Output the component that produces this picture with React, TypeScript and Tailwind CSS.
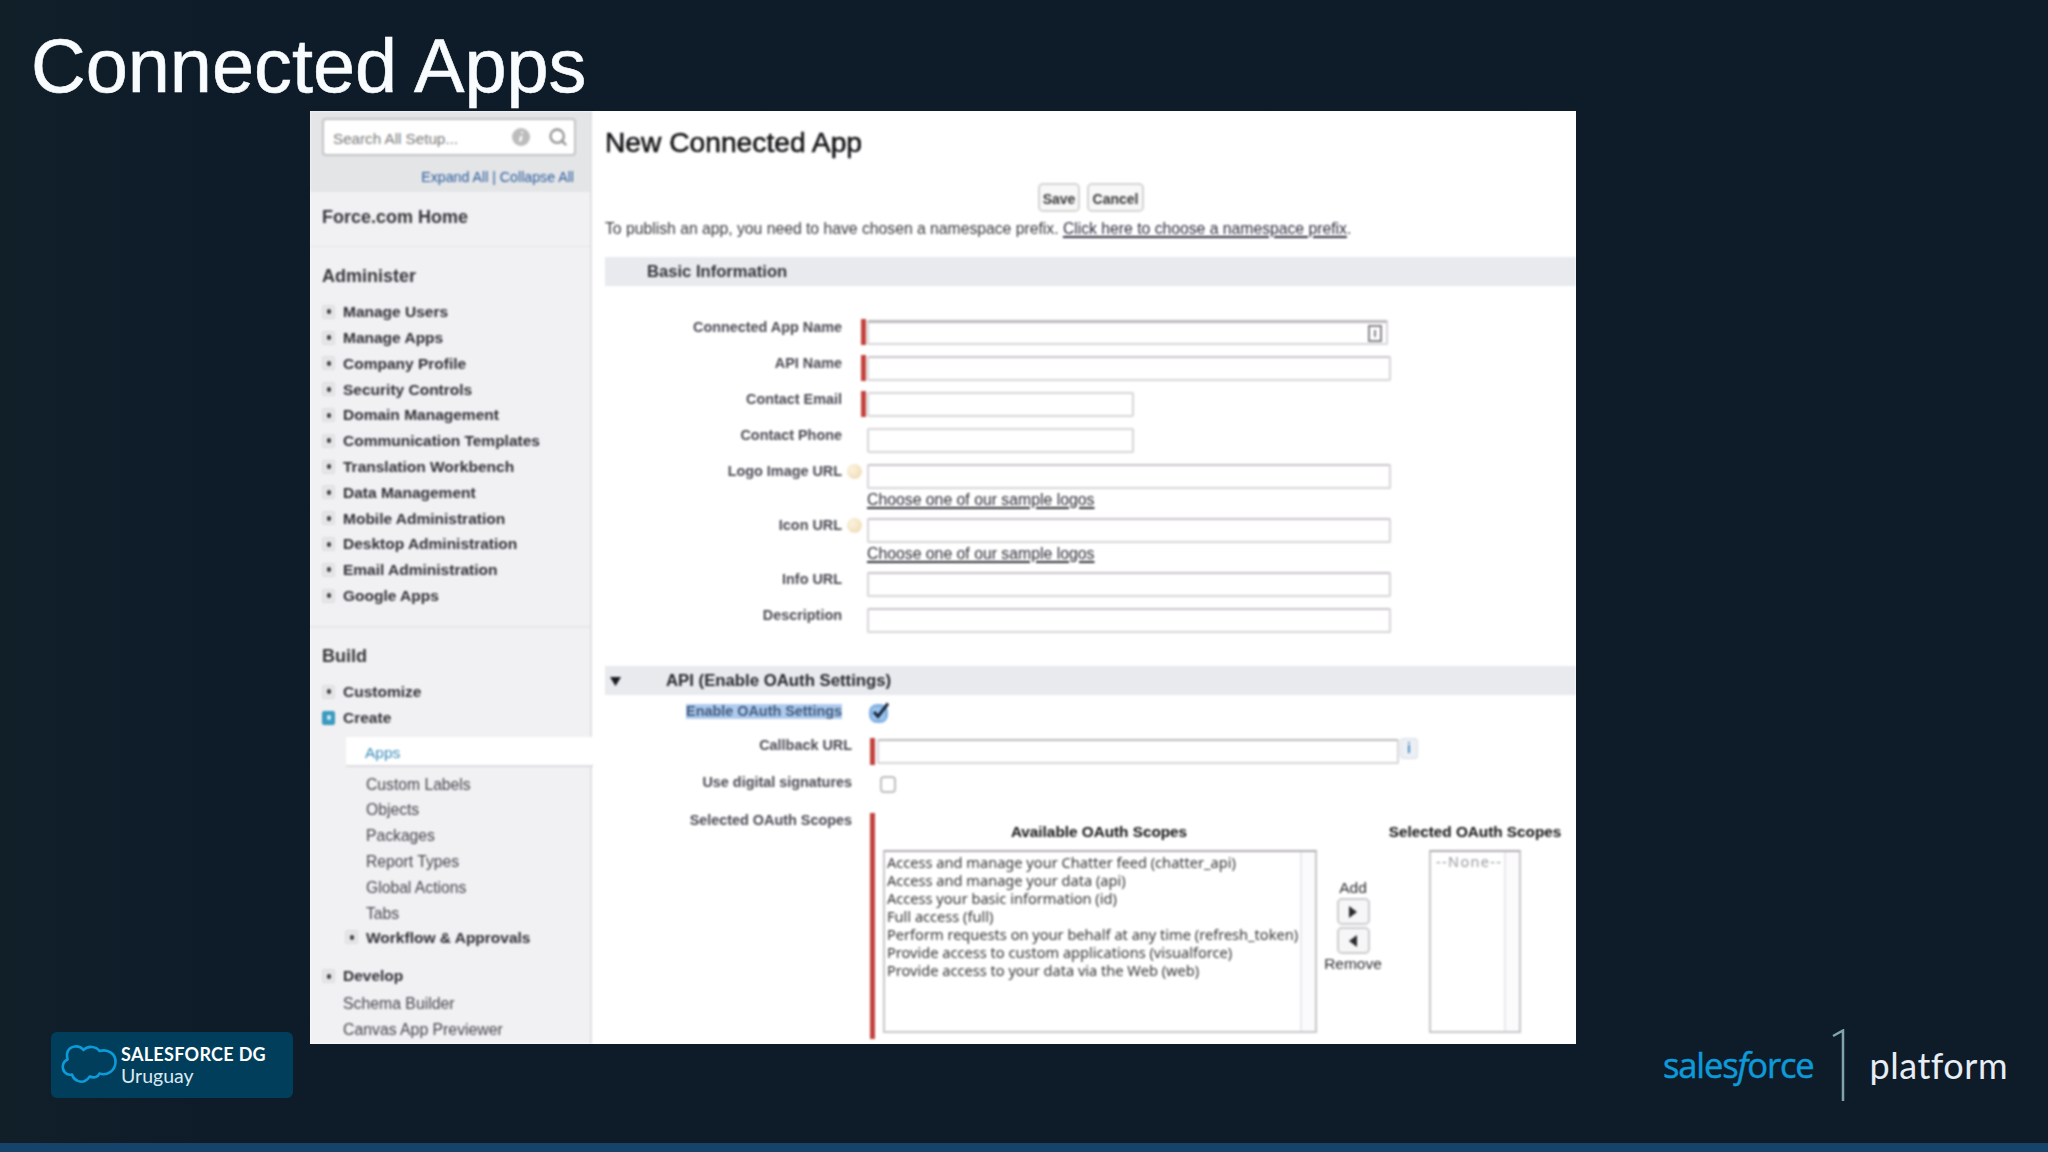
import { Search } from "lucide-react"
import { clsx } from "clsx"

type NavItem = { label: string; open?: boolean }

const ADMINISTER: NavItem[] = [
  { label: "Manage Users" },
  { label: "Manage Apps" },
  { label: "Company Profile" },
  { label: "Security Controls" },
  { label: "Domain Management" },
  { label: "Communication Templates" },
  { label: "Translation Workbench" },
  { label: "Data Management" },
  { label: "Mobile Administration" },
  { label: "Desktop Administration" },
  { label: "Email Administration" },
  { label: "Google Apps" },
]

const CREATE_ITEMS = ["Custom Labels", "Objects", "Packages", "Report Types", "Global Actions", "Tabs"]

const SCOPES = [
  "Access and manage your Chatter feed (chatter_api)",
  "Access and manage your data (api)",
  "Access your basic information (id)",
  "Full access (full)",
  "Perform requests on your behalf at any time (refresh_token)",
  "Provide access to custom applications (visualforce)",
  "Provide access to your data via the Web (web)",
]

function Toggle({ open }: { open?: boolean }) {
  return (
    <span className={clsx("flex h-[14px] w-[13px] items-center justify-center rounded-[2px] border", open ? "border-[#3a93b5] bg-[#3a9bc0]" : "border-[#dcdcdf] bg-[#e6e6e9]")}>
      <span className={clsx("h-[5px] w-[4px] rounded-full", open ? "bg-[#d5eef7]" : "bg-[#3c3c40]")} />
    </span>
  )
}

function NavRow({ label, open }: NavItem) {
  return (
    <li className="flex h-[25.8px] items-center gap-[8px] text-[15.5px] font-bold text-[#2f2f34]">
      <Toggle open={open} />
      {label}
    </li>
  )
}

function Sidebar() {
  return (
    <aside className="flex h-full w-[282px] shrink-0 flex-col border-r-2 border-[#e0e0e4] bg-[#f1f1f4]">
      <div className="h-[81px] bg-[#e4e5e7] pt-[7px] pr-[15px] pl-[12px]">
        <div className="flex h-[38px] w-[254px] items-center rounded-[4px] border-2 border-[#c4c4c6] bg-white pr-[6px] pl-[9px]">
          <span className="grow pt-[4px] text-[15.2px] text-[#7c7c7c]">Search All Setup...</span>
          <svg viewBox="0 0 18 18" className="size-[18px]">
            <circle cx="9" cy="9" r="9" fill="#bcbcbc" />
            <path d="M10.500 4L9.500 5M9.500 8L8 13.500" stroke="#fff" strokeWidth="2.500" fill="none" />
          </svg>
          <Search className="ml-[18px] size-[20px] text-[#969696]" strokeWidth={2.8} />
        </div>
        <div className="mt-[11px] w-[252px] text-right text-[14.2px] leading-[20px] text-[#2b5c9c]">Expand All | Collapse All</div>
      </div>
      <div className="h-[55px] border-b border-[#e6e6ea] pl-[12px] text-[18px] leading-[50px] font-bold text-[#353539]">Force.com Home</div>
      <div className="h-[381px] border-b-2 border-[#e6e6ea] pl-[12px]">
        <h2 className="pt-[15px] text-[18px] leading-[28px] font-bold text-[#353539]">Administer</h2>
        <ul className="pt-[9px]">
          {ADMINISTER.map((item) => <NavRow key={item.label} {...item} />)}
        </ul>
      </div>
      <div className="flex flex-col pl-[12px]">
        <h2 className="pt-[14px] text-[18px] leading-[28px] font-bold text-[#353539]">Build</h2>
        <ul className="pt-[9px]">
          <NavRow label="Customize" />
          <NavRow label="Create" open />
        </ul>
        <div className="-mr-[3px] mt-[6px] ml-[24px] h-[30px] border-b-2 border-[#dddde1] bg-white pl-[19px] text-[15.5px] leading-[31px] text-[#3a8dba]">Apps</div>
        <ul className="mt-[5px] pl-[44px] text-[15.7px] text-[#45454a]">
          {CREATE_ITEMS.map((label) => <li key={label} className="h-[25.8px] leading-[25.8px]">{label}</li>)}
        </ul>
        <ul className="-mt-[2px] pl-[23px]"><NavRow label="Workflow & Approvals" /></ul>
        <ul className="mt-[13px]"><NavRow label="Develop" /></ul>
        <ul className="mt-[2px] pl-[21px] text-[15.8px] text-[#45454a]">
          <li className="h-[25.7px] leading-[25.7px]">Schema Builder</li>
          <li className="h-[25.7px] leading-[25.7px]">Canvas App Previewer</li>
        </ul>
      </div>
    </aside>
  )
}

type FieldProps = { label: string; required?: boolean; short?: boolean; hint?: boolean; sample?: boolean; picker?: boolean }

function Field({ label, required, short, hint, sample, picker }: FieldProps) {
  return (
    <div className={clsx("flex items-start", sample ? "h-[54px]" : "h-[36px]")}>
      <div className="w-[237px] text-right text-[14.4px] leading-[16px] font-bold text-[#484852]">{label}</div>
      <div className="flex w-[25px] justify-end pr-px">
        {hint && <span className="mt-px mr-[4px] size-[15px] rounded-full bg-radial-[at_35%_35%] from-[#fbf3de] to-[#ecd6ae]" />}
        {required && <span className="h-[26px] w-[5px] bg-[#c2423c]" />}
      </div>
      <div className="pt-px">
        <div className={clsx("flex h-[25px] items-center justify-end rounded-[2px] border-2 border-[#d8d5d8] bg-white pr-[4px]", short ? "w-[267px]" : picker ? "w-[521px] border-t-3 border-t-[#bebabe]" : "w-[524px] border-t-[#c8c4c8]")}>
          {picker && (
            <span className="flex h-[17px] w-[14px] items-center justify-center border-2 border-[#848488]">
              <span className="h-[7px] w-[2px] bg-[#848488]" />
            </span>
          )}
        </div>
        {sample && <a className="block pt-px text-[15.8px] leading-[20px] text-[#2c2c36] underline decoration-[1.5px] underline-offset-[2px]">Choose one of our sample logos</a>}
      </div>
    </div>
  )
}

function ListBox({ children, className }: { children: React.ReactNode; className: string }) {
  return (
    <div className={clsx("flex h-[183px] border-2 border-[#cac6ca] border-t-[#b0acb0] bg-white", className)}>
      <div className="grow pt-px pl-[2px]">{children}</div>
      <div className="w-[15px] border-l-2 border-[#eae9ee] bg-[#fbfbfc]" />
    </div>
  )
}

function ArrowButton({ dir }: { dir: "left" | "right" }) {
  return (
    <span className="flex h-[27px] w-[33px] items-center justify-center rounded-[5px] border-2 border-[#cecbce] bg-[#f6f6f7]">
      <svg viewBox="0 0 8 12" className={clsx("h-[12px] w-[8px]", dir === "left" && "rotate-180")}>
        <path d="M0 0L8 6L0 12Z" fill="#2a2a2c" />
      </svg>
    </span>
  )
}

function MainForm() {
  return (
    <main className="flex grow flex-col pl-[13px]">
      <h1 className="mt-[13px] text-[28.2px] leading-[36px] text-[#141417] [-webkit-text-stroke:0.6px_#141417]">New Connected App</h1>
      <div className="mt-[23px] flex h-[29px] gap-[7px] pl-[433px] text-[14px] font-bold text-[#38383a]">
        <span className="flex w-[42px] items-center justify-center rounded-[5px] border-2 border-[#d6d4d6] bg-[#f8f8f8] pt-[3px]">Save</span>
        <span className="flex w-[57px] items-center justify-center rounded-[5px] border-2 border-[#d6d4d6] bg-[#f8f8f8] pt-[3px]">Cancel</span>
      </div>
      <p className="mt-[7px] text-[15.73px] leading-[20px] whitespace-nowrap text-[#37373d]">
        To publish an app, you need to have chosen a namespace prefix.{" "}
        <a className="text-[#2c2c40] underline decoration-[1.5px] underline-offset-[2px]">Click here to choose a namespace prefix</a>.
      </p>
      <h2 className="mt-[18px] h-[29px] bg-[#e8eaee] pl-[42px] text-[16.6px] leading-[30px] font-bold text-[#32323a]">Basic Information</h2>

      <div className="flex flex-col pt-[33px]">
        <Field label="Connected App Name" required picker />
        <Field label="API Name" required />
        <Field label="Contact Email" required short />
        <Field label="Contact Phone" short />
        <Field label="Logo Image URL" hint sample />
        <Field label="Icon URL" hint sample />
        <Field label="Info URL" />
        <Field label="Description" />
      </div>

      <h2 className="mt-[23px] flex h-[29px] shrink-0 items-center bg-[#e8eaee] pt-px pl-[5px] text-[16.75px] font-bold text-[#26262c]">
        <svg viewBox="0 0 11 9" className="h-[9px] w-[11px]"><path d="M0 0H11L5.500 9Z" fill="#18181e" /></svg>
        <span className="pl-[45px]">API (Enable OAuth Settings)</span>
      </h2>

      <div className="flex h-[43px] items-start pt-[7px] text-[14.4px] font-bold">
        <div className="flex w-[237px] justify-end pt-[2px] leading-[15px]"><span className="bg-[#aecbee] text-[#41597a]">Enable OAuth Settings</span></div>
        <svg viewBox="0 0 22 22" className="ml-[26px] size-[22px]">
          <rect x="1" y="2" width="19" height="19" rx="8" fill="#7fb0e2" />
          <rect x="4" y="5" width="13" height="13" rx="3" fill="#9cc3eb" />
          <path d="M6 10L10 14.500L20 1.500" fill="none" stroke="#14243c" strokeWidth="3" />
        </svg>
      </div>
      <div className="flex h-[38px] items-start">
        <div className="-mt-px w-[247px] text-right text-[14.4px] leading-[16px] font-bold text-[#484852]">Callback URL</div>
        <span className="ml-[18px] h-[27px] w-[5px] bg-[#c2423c]" />
        <span className="mt-px ml-[2px] h-[25px] w-[522px] rounded-[2px] border-2 border-[#d8d5d8] border-t-[#bebabe] bg-white" />
        <span className="ml-px flex h-[21px] w-[18px] items-center justify-center rounded-[3px] border border-[#d9dee6] bg-[#eceff4] text-[14px] font-bold text-[#4a8ac4]">i</span>
      </div>
      <div className="flex h-[37px] items-start">
        <div className="-mt-[2px] w-[247px] text-right text-[14.4px] leading-[16px] font-bold text-[#484852]">Use digital signatures</div>
        <span className="ml-[28px] h-[17px] w-[16px] rounded-[4px] border-2 border-[#c0bec0] bg-white" />
      </div>
      <div className="flex h-[226px] items-start">
        <div className="-mt-px w-[247px] text-right text-[14.4px] leading-[16px] font-bold text-[#484852]">Selected OAuth Scopes</div>
        <span className="ml-[18px] h-full w-[5px] bg-[#c2423c]" />
        <div className="ml-[8px] flex w-[434px] flex-col items-center pt-[9px]">
          <h3 className="h-[28px] pr-[2px] text-[15.3px] leading-[20px] font-bold text-[#111113]">Available OAuth Scopes</h3>
          <ListBox className="w-full">
            <ul className="font-['Noto_Sans'] text-[14.6px] leading-[18px] whitespace-nowrap text-[#343437]">
              {SCOPES.map((scope) => <li key={scope}>{scope}</li>)}
            </ul>
          </ListBox>
        </div>
        <div className="flex w-[72px] flex-col items-center pt-[65px] text-[15.5px] leading-[20px] text-[#2b2b31]">
          Add
          <div className="flex flex-col gap-[2px]"><ArrowButton dir="right" /><ArrowButton dir="left" /></div>
          Remove
        </div>
        <div className="flex w-[172px] flex-col items-center pt-[9px]">
          <h3 className="h-[28px] text-[15.3px] leading-[20px] font-bold whitespace-nowrap text-[#111113]">Selected OAuth Scopes</h3>
          <ListBox className="w-[92px]">
            <div className="pl-[3px] font-['Noto_Sans'] text-[14.4px] leading-[18px] tracking-[1.4px] whitespace-nowrap text-[#98989c]">--None--</div>
          </ListBox>
        </div>
      </div>
    </main>
  )
}

function Footer() {
  return (
    <footer className="flex justify-between pr-[40px] pl-[51px]">
      <div className="-mt-[12px] flex h-[66px] w-[242px] items-center rounded-[6px] bg-[#003e5c] pl-[10px]">
        <svg viewBox="0 0 56 40" className="-mt-[3px] h-[40px] w-[56px]" fill="none" stroke="#0d9ad8" strokeWidth="2.600" strokeLinejoin="round">
          <path d="M22.500 6C18 0.500 9 1.500 6.500 8C5.500 11 6 13 6.500 15.500C1 18 0.500 25 4 28.500C6 30.500 9 31 11 30.500C13 37 21 40 26 35.500C27.500 34.500 28 33 29 32.500C33 34.500 37 33 38.500 29.500C46 32 54 27 54.500 18.500C55 10 47 4.500 38.500 7C35 2 26.500 1.500 22.500 6Z" />
        </svg>
        <div className="pl-[4px] font-['Lato'] text-[18px] leading-[22px] text-[#dbe9f2]">
          <div className="font-bold tracking-[0.3px] text-white">SALESFORCE DG</div>
          <div className="text-[19.5px]">Uruguay</div>
        </div>
      </div>
      <div className="-mt-[6px] flex h-[54px] items-center whitespace-nowrap">
        <span className="font-['Open_Sans'] text-[34.5px] font-medium tracking-[-1.1px] text-[#0d9ad8] [-webkit-text-stroke:0.5px_#0d9ad8]">sales<i>f</i>orce</span>
        <svg viewBox="0 0 14 72" className="-mt-px mr-[24px] ml-[18px] h-[72px] w-[14px]" fill="none" stroke="#7fa5a8" strokeWidth="2.500">
          <path d="M1 7L11 1.500V72" />
        </svg>
        <span className="font-['Lato'] text-[36px] tracking-[0.5px] text-[#e6edf5]">platform</span>
      </div>
    </footer>
  )
}

export default function App() {
  return (
    <div className="flex h-[1152px] w-[2048px] flex-col overflow-hidden border-b-[9px] border-[#15436a] bg-linear-to-r from-[#101f28] via-[#0e1c2a] via-10% to-[#0e1c2a] font-['Liberation_Sans',Arial,sans-serif]">
      <h1 className="h-[111px] pl-[31px] text-[75.7px] leading-[132px] text-[#f8fcff] [-webkit-text-stroke:0.6px_#f8fcff]">Connected Apps</h1>
      <section className="ml-[310px] h-[933px] w-[1266px] shrink-0 overflow-hidden bg-white">
        <div className="flex h-full blur-[0.8px]">
          <Sidebar />
          <MainForm />
        </div>
      </section>
      <Footer />
    </div>
  )
}
